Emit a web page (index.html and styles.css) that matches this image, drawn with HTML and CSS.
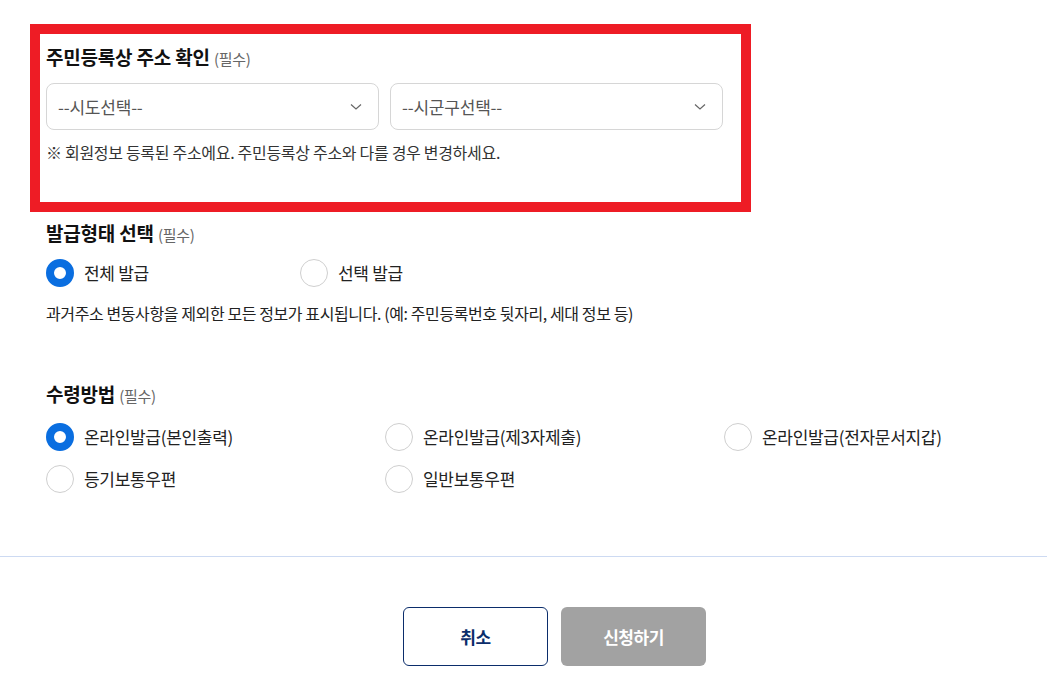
FILE: index.html
```html
<html>
<head>
    <title>증명서 발급 신청</title>
    <link rel="stylesheet" href="styles.css">
</head>
<body>
    <div class="page">
        <div class="highlight">
            <h3>주민등록상 주소 확인 <span class="req">(필수)</span></h3>
            <div class="selects">
                <div class="select">
                    <span>--시도선택--</span>
                    <svg width="12" height="8" viewBox="0 0 12 8"><path d="M1 1.5 L6 6 L11 1.5" fill="none" stroke="#666" stroke-width="1.2"/></svg>
                </div>
                <div class="select">
                    <span>--시군구선택--</span>
                    <svg width="12" height="8" viewBox="0 0 12 8"><path d="M1 1.5 L6 6 L11 1.5" fill="none" stroke="#666" stroke-width="1.2"/></svg>
                </div>
            </div>
            <p class="note">※ 회원정보 등록된 주소에요. 주민등록상 주소와 다를 경우 변경하세요.</p>
        </div>

        <div class="section">
            <h3>발급형태 선택 <span class="req">(필수)</span></h3>
            <div class="radios type">
                <label class="radio"><span class="dot checked"></span>전체 발급</label>
                <label class="radio"><span class="dot"></span>선택 발급</label>
            </div>
            <p class="desc">과거주소 변동사항을 제외한 모든 정보가 표시됩니다. (예: 주민등록번호 뒷자리, 세대 정보 등)</p>
        </div>

        <div class="section receive">
            <h3>수령방법 <span class="req">(필수)</span></h3>
            <div class="radios grid">
                <label class="radio"><span class="dot checked"></span>온라인발급(본인출력)</label>
                <label class="radio"><span class="dot"></span>온라인발급(제3자제출)</label>
                <label class="radio"><span class="dot"></span>온라인발급(전자문서지갑)</label>
                <label class="radio"><span class="dot"></span>등기보통우편</label>
                <label class="radio"><span class="dot"></span>일반보통우편</label>
            </div>
        </div>
    </div>
    <hr class="line">
    <div class="buttons">
        <button class="btn cancel">취소</button>
        <button class="btn submit">신청하기</button>
    </div>
</body>
</html>
```
FILE: styles.css
```css
body {
    margin: 0;
    font-family: "Noto Sans CJK KR", "Noto Sans", sans-serif;
    color: #222;
}
.page {
    padding: 24px 0 0 30px;
}
h3 {
    margin: 0;
    font-size: 19px;
    line-height: 26px;
    font-weight: 700;
    letter-spacing: -0.2px;
    color: #111;
}
.req {
    font-size: 15px;
    font-weight: 400;
    color: #666;
    letter-spacing: -0.3px;
}
.highlight {
    border: 10px solid #ee1c25;
    padding: 10px 0 39px 6px;
    width: 695px;
}
.selects {
    display: flex;
    gap: 11px;
    margin-top: 11px;
}
.select {
    width: 333px;
    height: 47px;
    box-sizing: border-box;
    border: 1px solid #d6d6d6;
    border-radius: 8px;
    display: flex;
    align-items: center;
    justify-content: space-between;
    padding: 0 16px 0 11px;
    font-size: 17px;
    color: #555;
    letter-spacing: -0.2px;
}
.note {
    margin: 11px 0 0;
    font-size: 16px;
    line-height: 22px;
    color: #333;
    letter-spacing: -0.3px;
}
.section {
    padding-left: 16px;
    margin-top: 8px;
}
.receive {
    margin-top: 57px;
}
.radios {
    margin-top: 11px;
}
.type {
    display: flex;
}
.type .radio {
    width: 254px;
}
.grid {
    display: grid;
    grid-template-columns: 339px 339px 300px;
    row-gap: 14px;
    margin-top: 14px;
}
.radio {
    display: flex;
    align-items: center;
    gap: 10px;
    font-size: 17px;
    line-height: 28px;
    letter-spacing: -0.3px;
    color: #222;
}
.dot {
    width: 28px;
    height: 28px;
    box-sizing: border-box;
    border: 1px solid #cfcfcf;
    border-radius: 50%;
    background: #fff;
}
.dot.checked {
    border: 8px solid #0a6ee0;
}
.desc {
    margin: 15px 0 0;
    font-size: 16px;
    line-height: 22px;
    color: #222;
    letter-spacing: -0.4px;
}
.line {
    margin: 63px 0 0;
    border: 0;
    border-top: 1px solid #cddaf2;
    height: 0;
}
.buttons {
    display: flex;
    justify-content: center;
    gap: 13px;
    padding-left: 62px;
    margin-top: 50px;
}
.btn {
    width: 145px;
    height: 59px;
    border-radius: 6px;
    font-family: "Noto Sans CJK KR", sans-serif;
    font-size: 17px;
    font-weight: 700;
    letter-spacing: -0.5px;
}
.cancel {
    background: #fff;
    border: 1px solid #0b2d6b;
    color: #0b2d6b;
}
.submit {
    background: #a2a2a2;
    border: 0;
    color: #fff;
}
```
